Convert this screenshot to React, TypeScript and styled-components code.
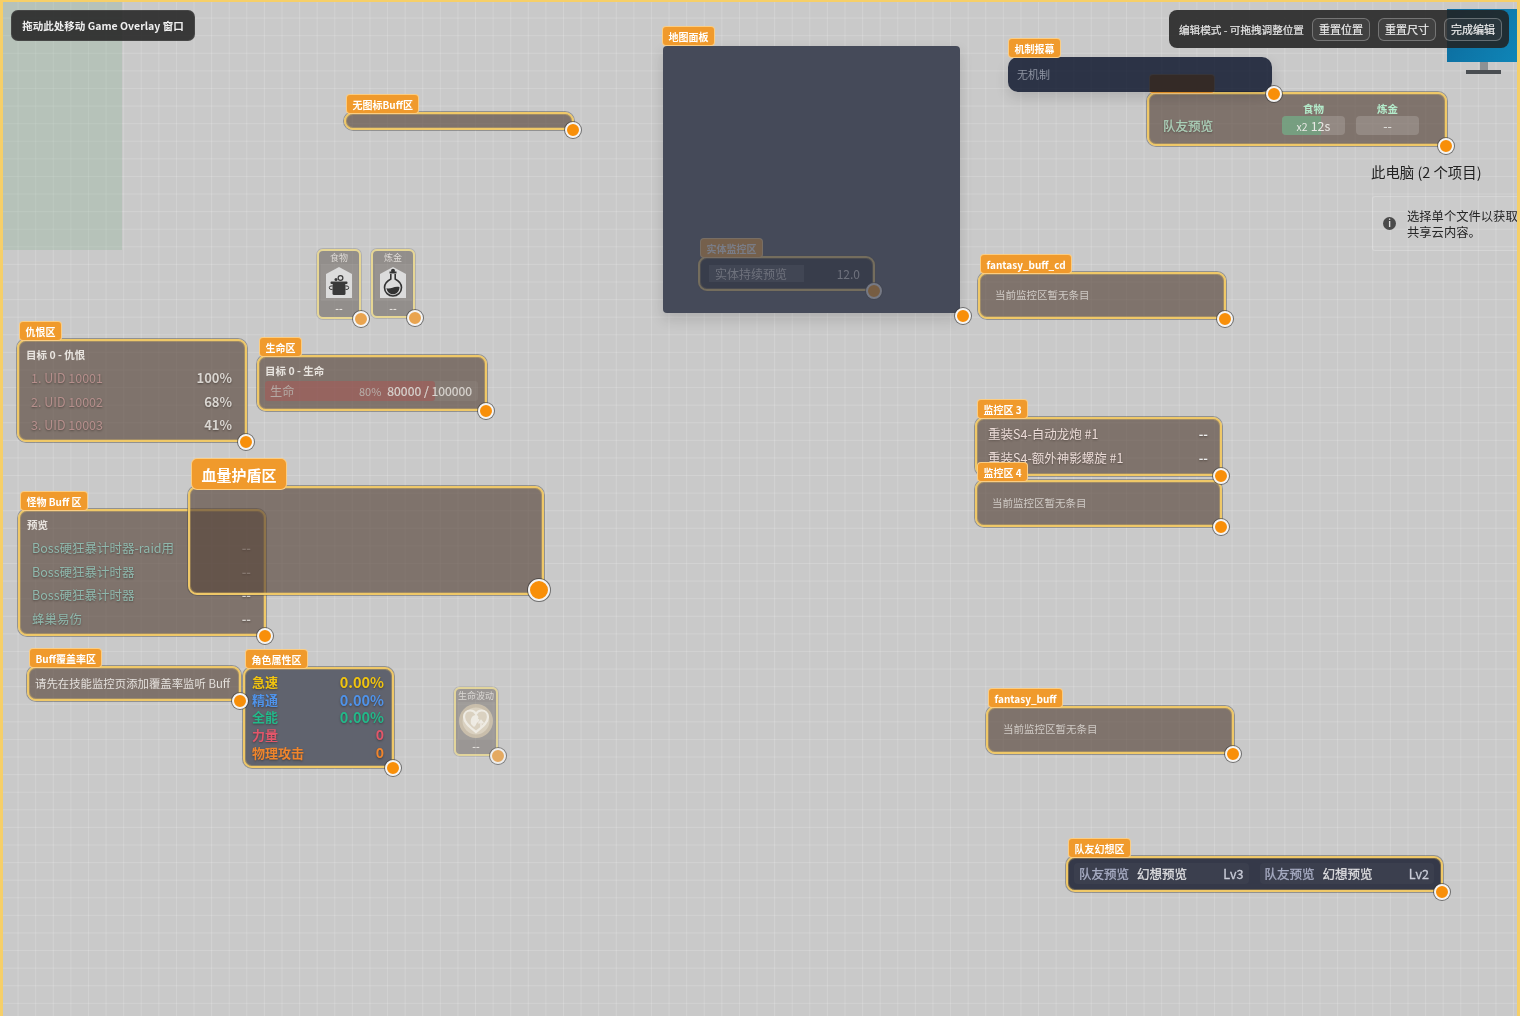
import React from "react";
import styled, { createGlobalStyle, css } from "styled-components";

const GlobalStyle = createGlobalStyle`
  html, body {
    margin: 0;
    padding: 0;
    width: 1520px;
    height: 1016px;
    overflow: hidden;
    background: #c9c9c9;
    font-family: "Noto Sans CJK SC", "Noto Sans", sans-serif;
  }
`;

type BoxProps = { $x: number; $y: number; $w: number; $h: number };

const Stage = styled.div`
  position: relative;
  width: 1520px;
  height: 1016px;
  overflow: hidden;
  filter: blur(0.35px);
  background-color: #c9c9c9;
  background-image:
    linear-gradient(rgba(255, 255, 255, 0.16) 1px, transparent 1px),
    linear-gradient(90deg, rgba(255, 255, 255, 0.16) 1px, transparent 1px);
  background-size: 17.6px 17.6px;
`;

const FrameEdge = styled.div`
  position: absolute;
  inset: 0;
  z-index: 50;
  pointer-events: none;
  border-style: solid;
  border-color: #f6cf68;
  border-width: 2px 3px 0 3px;
`;

const GreenArea = styled.div`
  position: absolute;
  left: 3px;
  top: 2px;
  width: 119px;
  height: 248px;
  background: rgba(140, 180, 150, 0.3);
`;

/* desktop showing through behind the overlay */
const Monitor = styled.div`
  position: absolute;
  left: 1447px;
  top: 9px;
  width: 73px;
  display: flex;
  flex-direction: column;
  align-items: center;
`;

const MonitorScreen = styled.div`
  width: 100%;
  height: 53px;
  background: linear-gradient(120deg, #0c6a9c, #0f86b8);
`;

const MonitorNeck = styled.div`
  width: 8px;
  height: 8px;
  background: #8d9194;
`;

const MonitorFoot = styled.div`
  width: 35px;
  height: 4px;
  background: #4a4e52;
`;

const DesktopInfo = styled.div`
  position: absolute;
  left: 1371px;
  top: 162px;
  display: flex;
  flex-direction: column;
  gap: 14px;
`;

const DesktopTitle = styled.div`
  font-size: 14.4px;
  line-height: 20px;
  color: #222;
  white-space: nowrap;
`;

const InfoBox = styled.div`
  width: 152px;
  height: 55px;
  margin-left: 1px;
  box-sizing: border-box;
  display: flex;
  align-items: center;
  gap: 11px;
  padding-left: 10px;
  border: 1px solid rgba(255, 255, 255, 0.18);
  border-radius: 3px;
  background: rgba(255, 255, 255, 0.05);
  font-size: 12.3px;
  line-height: 16px;
  color: #262626;
  white-space: pre;
`;

const InfoDot = styled.div`
  flex: none;
  width: 13px;
  height: 13px;
  border-radius: 50%;
  background: #4a4a4a;
  color: #ddd;
  font-size: 9px;
  line-height: 13px;
  font-weight: 700;
  text-align: center;
`;

const DragBar = styled.div`
  position: absolute;
  left: 11px;
  top: 10px;
  width: 184px;
  height: 31px;
  box-sizing: border-box;
  display: flex;
  align-items: center;
  justify-content: center;
  border-radius: 7px;
  background: rgba(40, 40, 40, 0.9);
  border: 1px solid rgba(255, 255, 255, 0.08);
  color: #f0f0f0;
  font-size: 10.5px;
  font-weight: 700;
  z-index: 30;
`;

const EditBar = styled.div`
  position: absolute;
  left: 1169px;
  top: 10px;
  width: 340px;
  height: 38px;
  box-sizing: border-box;
  display: flex;
  align-items: center;
  gap: 8px;
  padding: 0 8px 0 10px;
  border-radius: 8px;
  background: rgba(34, 34, 34, 0.88);
  color: #e6e6e6;
  font-size: 10.6px;
  -webkit-text-stroke: 0.2px;
  z-index: 30;
`;

const EditHint = styled.span`
  flex: 1;
  white-space: nowrap;
`;

const EditButton = styled.button`
  flex: none;
  width: 58px;
  height: 23px;
  padding: 0;
  border: 1px solid rgba(255, 255, 255, 0.28);
  border-radius: 6px;
  background: rgba(255, 255, 255, 0.05);
  color: #ececec;
  font-family: inherit;
  font-size: 11px;
  -webkit-text-stroke: 0.2px;
`;

const Panel = styled.div<BoxProps & { $tone?: "brown" | "slate" | "navy"; $ghost?: boolean }>`
  position: absolute;
  left: ${(p) => p.$x}px;
  top: ${(p) => p.$y}px;
  width: ${(p) => p.$w}px;
  height: ${(p) => p.$h}px;
  box-sizing: border-box;
  border: 2px solid #efc868;
  border-radius: 9px;
  box-shadow:
    0 0 0 1px rgba(70, 70, 70, 0.42),
    inset 0 0 0 1px rgba(236, 194, 95, 0.3);
  color: #e6e2dd;
  ${(p) =>
    p.$tone === "slate"
      ? css`
          background: #60636e;
        `
      : p.$tone === "navy"
        ? css`
            background: #353949;
          `
        : css`
            background: rgba(88, 69, 58, 0.65);
          `}
  ${(p) =>
    p.$ghost &&
    css`
      opacity: 0.28;
      background: #1a1d2a;
      z-index: 7;
    `}
`;

const PanelTag = styled.div<{ $big?: boolean; $minW?: number }>`
  position: absolute;
  left: ${(p) => (p.$big ? 1 : 0)}px;
  top: ${(p) => (p.$big ? -30 : -20)}px;
  height: ${(p) => (p.$big ? 32 : 20)}px;
  min-width: ${(p) => p.$minW ?? 0}px;
  box-sizing: border-box;
  padding: 0 ${(p) => (p.$big ? 9.5 : 5.5)}px;
  display: flex;
  align-items: center;
  border: 1px solid rgba(255, 222, 160, 0.75);
  border-radius: ${(p) => (p.$big ? 6 : 4)}px;
  background: #f09a2c;
  color: #fff;
  font-size: ${(p) => (p.$big ? 15 : 10)}px;
  font-weight: 700;
  white-space: nowrap;
  z-index: 2;
`;

const Grip = styled.div<{ $big?: boolean; $soft?: boolean; $off?: number }>`
  position: absolute;
  right: ${(p) => p.$off ?? (p.$big ? -8 : -9)}px;
  bottom: ${(p) => p.$off ?? (p.$big ? -8 : -10)}px;
  width: ${(p) => (p.$big ? 22 : 16)}px;
  height: ${(p) => (p.$big ? 22 : 16)}px;
  box-sizing: border-box;
  border-radius: 50%;
  background: ${(p) => (p.$soft ? "#e9a44f" : "#f88f09")};
  border: 2px solid #f4f4f4;
  box-shadow: 0 0 0 1px rgba(50, 50, 50, 0.6);
  z-index: 3;
`;

const Hollow = styled.div`
  padding: 14px 15px;
  font-size: 10.5px;
  line-height: 14px;
  color: #cfcac5;
`;

const Stack = styled.div<{ $pl?: number; $pr?: number; $py?: number }>`
  display: flex;
  flex-direction: column;
  padding: ${(p) => p.$py ?? 0}px ${(p) => p.$pr ?? 0}px ${(p) => p.$py ?? 0}px ${(p) => p.$pl ?? 0}px;
`;

const Heading = styled.div<{ $mb?: number }>`
  font-size: 10.5px;
  line-height: 14px;
  font-weight: 700;
  color: #e8e4df;
  margin-bottom: ${(p) => p.$mb ?? 4}px;
`;

const Line = styled.div<{ $h?: number; $pl?: number }>`
  display: flex;
  align-items: center;
  justify-content: space-between;
  height: ${(p) => p.$h ?? 23.6}px;
  padding-left: ${(p) => p.$pl ?? 0}px;
  line-height: ${(p) => p.$h ?? 23.6}px;
  text-shadow: 0 1px 2px rgba(30, 25, 20, 0.45);
`;

const LineName = styled.span<{ $c?: string; $fs?: number; $w?: number }>`
  color: ${(p) => p.$c ?? "#e6e2dd"};
  font-size: ${(p) => p.$fs ?? 12.5}px;
  font-weight: ${(p) => p.$w ?? 400};
  white-space: nowrap;
`;

const LineValue = styled.span<{ $c?: string; $fs?: number; $w?: number }>`
  color: ${(p) => p.$c ?? "#d9d5d0"};
  font-size: ${(p) => p.$fs ?? 12.5}px;
  font-weight: ${(p) => p.$w ?? 700};
  white-space: nowrap;
`;

const HpBar = styled.div`
  position: relative;
  height: 20px;
  margin-top: 3px;
  display: flex;
  align-items: center;
  padding: 0 6px 0 5px;
  border-radius: 3px;
  background: rgba(255, 255, 255, 0.05);
  font-size: 12.2px;
`;

const HpFill = styled.div`
  position: absolute;
  left: 0;
  top: 0;
  bottom: 0;
  border-radius: 3px;
  background: rgba(175, 70, 70, 0.42);
`;

const HpName = styled.span`
  position: relative;
  flex: 1;
  color: #b5aaa5;
`;

const HpPct = styled.span`
  position: relative;
  font-size: 11px;
  color: #b8b0ab;
  margin-right: 6px;
`;

const HpNum = styled.span`
  position: relative;
  color: #d8d4cf;
  -webkit-text-stroke: 0.2px;
`;

const NoteText = styled.div`
  padding: 7px 6px;
  font-size: 11.4px;
  line-height: 16px;
  color: #e4e0dc;
  white-space: nowrap;
`;

const MapBoard = styled.div`
  position: absolute;
  left: 663px;
  top: 46px;
  width: 297px;
  height: 267px;
  border-radius: 4px;
  background: #454a59;
  box-shadow: 0 6px 14px rgba(0, 0, 0, 0.14);
  z-index: 6;
`;

const MapTag = styled(PanelTag)`
  left: -1px;
  top: -20px;
`;

const EntityRow = styled.div`
  display: flex;
  align-items: center;
  justify-content: space-between;
  height: 100%;
  padding: 0 13px 0 9px;
  font-size: 12px;
  color: #d6d6d6;
`;

const EntityName = styled.span`
  width: 95px;
  height: 17px;
  line-height: 17px;
  padding-left: 6px;
  box-sizing: border-box;
  background: rgba(255, 255, 255, 0.14);
  white-space: nowrap;
`;

const Banner = styled.div`
  position: absolute;
  left: 1008px;
  top: 57px;
  width: 264px;
  height: 35px;
  box-sizing: border-box;
  display: flex;
  align-items: center;
  padding: 0 0 2px 9px;
  border-radius: 10px;
  background: rgba(5, 14, 37, 0.8);
  box-shadow: 0 6px 14px rgba(0, 0, 0, 0.12);
  color: #8f95a3;
  font-size: 11px;
  z-index: 8;
`;

const BannerTag = styled(PanelTag)`
  left: 0;
  top: -19px;
`;

const TeamRow = styled.div`
  display: flex;
  align-items: flex-end;
  height: 100%;
  box-sizing: border-box;
  padding: 0 0 9px 14px;
`;

const TeamName = styled.div`
  width: 119px;
  font-size: 12.5px;
  line-height: 19px;
  color: #abcfb8;
  -webkit-text-stroke: 0.3px;
  text-shadow: 0 1px 2px rgba(30, 25, 20, 0.5);
`;

const TeamCols = styled.div`
  display: flex;
  gap: 11px;
`;

const TeamCol = styled.div`
  width: 63px;
  display: flex;
  flex-direction: column;
  align-items: center;
`;

const TeamHead = styled.div`
  font-size: 10.5px;
  line-height: 15px;
  font-weight: 700;
  color: #b4eccb;
`;

const Chip = styled.div`
  position: relative;
  width: 63px;
  height: 19px;
  border-radius: 4px;
  overflow: hidden;
  background: rgba(255, 255, 255, 0.16);
  font-size: 12.5px;
  line-height: 19px;
  text-align: center;
  color: #e8e8e4;
`;

const ChipFill = styled.div`
  position: absolute;
  left: 0;
  top: 0;
  bottom: 0;
  background: rgba(95, 175, 125, 0.55);
`;

const ChipText = styled.span`
  position: relative;
`;

const ChipCount = styled.span`
  font-size: 10.5px;
  margin-right: 3px;
`;

const FantasyRow = styled.div`
  display: flex;
  gap: 11px;
  padding: 5px 7px 5px 6px;
`;

const FantasyItem = styled.div`
  flex: 1;
  height: 21px;
  display: flex;
  align-items: center;
  gap: 8px;
  padding: 0 5px;
  border-radius: 4px;
  background: rgba(255, 255, 255, 0.03);
  font-size: 12.5px;
  -webkit-text-stroke: 0.3px;
`;

const FantasyOwner = styled.span`
  color: #a8adc4;
`;

const FantasySkill = styled.span`
  flex: 1;
  color: #dfdfe2;
`;

const FantasyLevel = styled.span`
  color: #c9ccd8;
`;

const Card = styled.div<{ $x: number; $y: number; $h: number; $faint?: boolean }>`
  position: absolute;
  left: ${(p) => p.$x}px;
  top: ${(p) => p.$y}px;
  width: 44px;
  height: ${(p) => p.$h}px;
  box-sizing: border-box;
  display: flex;
  flex-direction: column;
  align-items: center;
  padding-top: 1px;
  border: 2px solid #e6d694;
  border-radius: 6px;
  background: rgba(100, 92, 88, 0.55);
  opacity: ${(p) => (p.$faint ? 0.85 : 1)};
  box-shadow: 0 0 0 1px rgba(120, 120, 120, 0.3);
`;

const CardTitle = styled.div`
  font-size: 9px;
  line-height: 12px;
  color: #dedad6;
`;

const CardIconBox = styled.div`
  width: 37px;
  height: 37px;
  display: flex;
  align-items: center;
  justify-content: center;
  background: rgba(255, 255, 255, 0.05);
`;

const CardDash = styled.div`
  font-size: 10px;
  line-height: 14px;
  font-weight: 700;
  color: #e6e2dd;
`;

const PotIcon = () => (
  <svg width="28" height="33" viewBox="0 0 28 33">
    <path d="M14 1 L27 8 V32 H1 V8 Z" fill="#dcdcdc" />
    <rect x="5.5" y="15.5" width="17" height="2.5" rx="1" fill="#3a3a3a" />
    <rect x="7.5" y="17.5" width="13" height="11.5" rx="1.5" fill="#3a3a3a" />
    <circle cx="11" cy="13.5" r="1.5" fill="#3a3a3a" />
    <circle cx="15.5" cy="12" r="2.4" fill="none" stroke="#3a3a3a" strokeWidth="1.2" />
    <path d="M7.5 20 H6 a1.3 1.3 0 0 0 0 3.4 H7.5 M20.5 20 h1.5 a1.3 1.3 0 0 1 0 3.4 H20.5" fill="none" stroke="#3a3a3a" strokeWidth="1" />
  </svg>
);

const FlaskIcon = () => (
  <svg width="28" height="33" viewBox="0 0 28 33">
    <path d="M14 1 L27 8 V32 H1 V8 Z" fill="#dcdcdc" />
    <path d="M10.5 5.5 h7 v2 h-7 Z" fill="#333" />
    <circle cx="14" cy="4.8" r="2" fill="#333" />
    <path d="M11.8 8 V13 C8 15 5.5 17.5 5.5 21.5 C5.5 26.5 9.5 30 14 30 C18.5 30 22.5 26.5 22.5 21.5 C22.5 17.5 20 15 16.2 13 V8" fill="#dcdcdc" stroke="#333" strokeWidth="1.6" />
    <path d="M7.5 22 C11 24 15 19.5 20.5 21 C20.5 25.5 17.5 28.3 14 28.3 C10.5 28.3 7.8 25.5 7.5 22 Z" fill="#333" />
  </svg>
);

const HeartIcon = () => (
  <svg width="36" height="36" viewBox="0 0 36 36">
    <circle cx="18" cy="18" r="17" fill="#c9bda6" />
    <circle cx="18" cy="18" r="13.5" fill="#ddd3bf" />
    <path d="M18 29 C10 23 6 19 6 14 C6 10 9 7.5 12.5 7.5 C15 7.5 17 9 18 11 C19 9 21 7.5 23.5 7.5 C27 7.5 30 10 30 14 C30 19 26 23 18 29 Z" fill="none" stroke="#f5f1e8" strokeWidth="2.2" />
    <path d="M13 21 C12 16 14 12 18 12 C20 12 21 14 20 16 C22 16 22 18 20 19 C18 20 18 23 16 24 Z" fill="#f5f1e8" />
    <path d="M23 25 V18 M20.5 20.5 L23 17.5 L25.5 20.5" fill="none" stroke="#f5f1e8" strokeWidth="1.5" />
  </svg>
);

const threatRows = [
  ["1. UID 10001", "100%"],
  ["2. UID 10002", "68%"],
  ["3. UID 10003", "41%"],
];

const monsterRows = ["Boss硬狂暴计时器-raid用", "Boss硬狂暴计时器", "Boss硬狂暴计时器", "蜂巢易伤"];

const statRows = [
  { name: "急速", value: "0.00%", color: "#f1c40f", size: 14.5 },
  { name: "精通", value: "0.00%", color: "#4f93ea", size: 14.5 },
  { name: "全能", value: "0.00%", color: "#22b98a", size: 14.5 },
  { name: "力量", value: "0", color: "#e2566a", size: 14 },
  { name: "物理攻击", value: "0", color: "#f0852c", size: 14 },
];

const fantasyRows = [
  { owner: "队友预览", skill: "幻想预览", level: "Lv3" },
  { owner: "队友预览", skill: "幻想预览", level: "Lv2" },
];

export default function App() {
  return (
    <Stage>
      <GlobalStyle />
      <GreenArea />
      <Monitor>
        <MonitorScreen />
        <MonitorNeck />
        <MonitorFoot />
      </Monitor>
      <DesktopInfo>
        <DesktopTitle>此电脑 (2 个项目)</DesktopTitle>
        <InfoBox>
          <InfoDot>i</InfoDot>
          {"选择单个文件以获取\n共享云内容。"}
        </InfoBox>
      </DesktopInfo>

      <DragBar>拖动此处移动 Game Overlay 窗口</DragBar>
      <EditBar>
        <EditHint>编辑模式 - 可拖拽调整位置</EditHint>
        <EditButton>重置位置</EditButton>
        <EditButton>重置尺寸</EditButton>
        <EditButton>完成编辑</EditButton>
      </EditBar>

      <Panel $x={344} $y={112} $w={230} $h={18}>
        <PanelTag>无图标Buff区</PanelTag>
        <Grip />
      </Panel>

      <MapBoard>
        <MapTag>地图面板</MapTag>
        <Grip $off={-11} />
      </MapBoard>
      <Panel $x={698} $y={256} $w={177} $h={35} $ghost>
        <PanelTag>实体监控区</PanelTag>
        <EntityRow>
          <EntityName>实体持续预览</EntityName>
          <span>12.0</span>
        </EntityRow>
        <Grip />
      </Panel>

      <Panel $x={1147} $y={92} $w={300} $h={54}>
        <PanelTag $minW={66}>&nbsp;</PanelTag>
        <TeamRow>
          <TeamName>队友预览</TeamName>
          <TeamCols>
            <TeamCol>
              <TeamHead>食物</TeamHead>
              <Chip>
                <ChipFill style={{ width: "62%" }} />
                <ChipText>
                  <ChipCount>x2</ChipCount>12s
                </ChipText>
              </Chip>
            </TeamCol>
            <TeamCol>
              <TeamHead>炼金</TeamHead>
              <Chip>--</Chip>
            </TeamCol>
          </TeamCols>
        </TeamRow>
        <Grip />
      </Panel>
      <Banner>
        <BannerTag>机制报幕</BannerTag>
        无机制
        <Grip $off={-10} />
      </Banner>

      <Panel $x={978} $y={272} $w={248} $h={47}>
        <PanelTag>fantasy_buff_cd</PanelTag>
        <Hollow>当前监控区暂无条目</Hollow>
        <Grip />
      </Panel>

      <Panel $x={975} $y={417} $w={247} $h={59}>
        <PanelTag>监控区 3</PanelTag>
        <Stack $pl={11} $pr={12} $py={3}>
          <Line>
            <LineName $c="#ecdcd8">重装S4-自动龙炮 #1</LineName>
            <LineValue $c="#eee">--</LineValue>
          </Line>
          <Line>
            <LineName $c="#ecdcd8">重装S4-额外神影螺旋 #1</LineName>
            <LineValue $c="#eee">--</LineValue>
          </Line>
        </Stack>
        <Grip />
      </Panel>
      <Panel $x={975} $y={480} $w={247} $h={47}>
        <PanelTag>监控区 4</PanelTag>
        <Hollow>当前监控区暂无条目</Hollow>
        <Grip />
      </Panel>

      <Panel $x={986} $y={706} $w={248} $h={48}>
        <PanelTag>fantasy_buff</PanelTag>
        <Hollow>当前监控区暂无条目</Hollow>
        <Grip />
      </Panel>

      <Panel $x={1066} $y={856} $w={377} $h={36} $tone="navy">
        <PanelTag>队友幻想区</PanelTag>
        <FantasyRow>
          {fantasyRows.map((f) => (
            <FantasyItem key={f.level}>
              <FantasyOwner>{f.owner}</FantasyOwner>
              <FantasySkill>{f.skill}</FantasySkill>
              <FantasyLevel>{f.level}</FantasyLevel>
            </FantasyItem>
          ))}
        </FantasyRow>
        <Grip />
      </Panel>

      <Panel $x={17} $y={339} $w={230} $h={103}>
        <PanelTag>仇恨区</PanelTag>
        <Stack $pl={7} $pr={13} $py={7}>
          <Heading>目标 0 - 仇恨</Heading>
          {threatRows.map(([name, pct]) => (
            <Line key={name} $pl={5}>
              <LineName $c="#b58f8c">{name}</LineName>
              <LineValue $fs={13}>{pct}</LineValue>
            </Line>
          ))}
        </Stack>
        <Grip />
      </Panel>

      <Panel $x={257} $y={355} $w={230} $h={56}>
        <PanelTag>生命区</PanelTag>
        <Stack $pl={6} $pr={7} $py={7}>
          <Heading $mb={0}>目标 0 - 生命</Heading>
          <HpBar>
            <HpFill style={{ width: "80%" }} />
            <HpName>生命</HpName>
            <HpPct>80%</HpPct>
            <HpNum>80000 / 100000</HpNum>
          </HpBar>
        </Stack>
        <Grip />
      </Panel>

      <Panel $x={18} $y={509} $w={248} $h={127}>
        <PanelTag>怪物 Buff 区</PanelTag>
        <Stack $pl={7} $pr={13} $py={7}>
          <Heading>预览</Heading>
          {monsterRows.map((name, i) => (
            <Line key={i} $pl={5}>
              <LineName $c="#8fb8ad">{name}</LineName>
              <LineValue $c="#d6d2cd">--</LineValue>
            </Line>
          ))}
        </Stack>
        <Grip />
      </Panel>

      <Panel $x={188} $y={486} $w={356} $h={109}>
        <PanelTag $big>血量护盾区</PanelTag>
        <Grip $big />
      </Panel>

      <Panel $x={27} $y={666} $w={214} $h={35}>
        <PanelTag>Buff覆盖率区</PanelTag>
        <NoteText>请先在技能监控页添加覆盖率监听 Buff</NoteText>
        <Grip />
      </Panel>

      <Panel $x={243} $y={667} $w={151} $h={101} $tone="slate">
        <PanelTag>角色属性区</PanelTag>
        <Stack $pl={7} $pr={8} $py={4}>
          {statRows.map((s) => (
            <Line key={s.name} $h={17.7}>
              <LineName $c={s.color} $fs={13} $w={700}>{s.name}</LineName>
              <LineValue $c={s.color} $fs={s.size}>{s.value}</LineValue>
            </Line>
          ))}
        </Stack>
        <Grip />
      </Panel>

      <Card $x={317} $y={249} $h={70}>
        <CardTitle>食物</CardTitle>
        <CardIconBox>
          <PotIcon />
        </CardIconBox>
        <CardDash>--</CardDash>
        <Grip $soft $off={-10} />
      </Card>
      <Card $x={371} $y={249} $h={69}>
        <CardTitle>炼金</CardTitle>
        <CardIconBox>
          <FlaskIcon />
        </CardIconBox>
        <CardDash>--</CardDash>
        <Grip $soft $off={-10} />
      </Card>
      <Card $x={454} $y={687} $h={69} $faint>
        <CardTitle>生命波动</CardTitle>
        <CardIconBox>
          <HeartIcon />
        </CardIconBox>
        <CardDash>--</CardDash>
        <Grip $soft $off={-10} />
      </Card>

      <FrameEdge />
    </Stage>
  );
}
